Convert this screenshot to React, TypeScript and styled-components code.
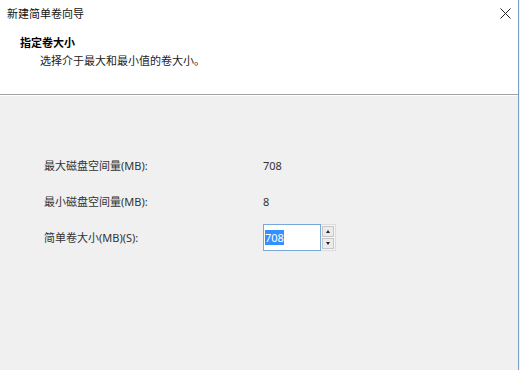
import React from 'react';
import styled, { createGlobalStyle } from 'styled-components';

const GlobalStyle = createGlobalStyle`
  html, body {
    margin: 0;
    padding: 0;
    background: #eef3f8;
  }
  body {
    font-family: 'Noto Sans', 'Noto Sans CJK SC', sans-serif;
    font-size: 11px;
    color: #1e1e1e;
  }
`;

const Window = styled.div`
  width: 519px;
  height: 370px;
  box-sizing: border-box;
  display: flex;
  flex-direction: column;
  border-right: 1px solid #7d9ec6;
  background: #f0f0f0;
  overflow: hidden;
`;

const Header = styled.div`
  height: 94px;
  background: #ffffff;
  border-bottom: 1px solid #a0a0a0;
  display: flex;
  flex-direction: column;
`;

const TitleBar = styled.div`
  height: 26px;
  display: flex;
  align-items: center;
  justify-content: space-between;
  padding: 0 7px 0 7px;
  color: #111;
`;

const CloseButton = styled.button`
  border: none;
  background: none;
  padding: 0;
  width: 12px;
  height: 12px;
  display: flex;
  align-items: center;
  justify-content: center;
  cursor: pointer;
`;

const Heading = styled.div`
  padding: 8px 0 0 20px;
  display: flex;
  flex-direction: column;
`;

const HeadingTitle = styled.div`
  font-weight: bold;
  line-height: 18px;
  color: #000;
`;

const HeadingSub = styled.div`
  padding-left: 20px;
  line-height: 17px;
  color: #222;
`;

const Body = styled.div`
  flex: 1;
  border-top: 1px solid #ffffff;
  padding: 55px 0 0 44px;
  display: flex;
  flex-direction: column;
  gap: 8px;
`;

const Row = styled.div`
  height: 28px;
  display: grid;
  grid-template-columns: 219px auto;
  align-items: center;
  color: #333;
`;

const Spin = styled.div`
  display: flex;
  height: 27px;
`;

const SpinInput = styled.input`
  width: 58px;
  height: 27px;
  box-sizing: border-box;
  border: 1px solid #7aa7d9;
  padding: 0 1px;
  font: inherit;
  color: #333;
  background: #fff;
  outline: none;

  &::selection {
    background: #3390ff;
    color: #fff;
  }
`;

const SpinButtons = styled.div`
  width: 15px;
  display: flex;
  flex-direction: column;
  gap: 1px;
  padding: 1px 0;
  box-sizing: border-box;
  background: #f6f6f6;
  border: 1px solid #dcdcdc;
  border-left: none;
`;

const SpinButton = styled.div`
  flex: 1;
  margin: 0 1px;
  background: #ebebeb;
  border: 1px solid #c6c6c6;
  display: flex;
  align-items: center;
  justify-content: center;
`;

const Arrow = styled.div<{ $up?: boolean }>`
  width: 0;
  height: 0;
  border-left: 2.5px solid transparent;
  border-right: 2.5px solid transparent;
  ${p => (p.$up ? 'border-bottom: 3px solid #222;' : 'border-top: 3px solid #222;')}
`;

export default function App() {
  const ref = React.useRef<HTMLInputElement>(null);
  React.useEffect(() => {
    ref.current?.focus();
    ref.current?.select();
  }, []);

  return (
    <>
      <GlobalStyle />
      <Window>
        <Header>
          <TitleBar>
            <span>新建简单卷向导</span>
            <CloseButton aria-label="关闭">
              <svg width="11" height="11" viewBox="0 0 11 11">
                <path d="M0.5 0.5 L10.5 10.5 M10.5 0.5 L0.5 10.5" stroke="#222" strokeWidth="1" />
              </svg>
            </CloseButton>
          </TitleBar>
          <Heading>
            <HeadingTitle>指定卷大小</HeadingTitle>
            <HeadingSub>选择介于最大和最小值的卷大小。</HeadingSub>
          </Heading>
        </Header>
        <Body>
          <Row>
            <span>最大磁盘空间量(MB):</span>
            <span>708</span>
          </Row>
          <Row>
            <span>最小磁盘空间量(MB):</span>
            <span>8</span>
          </Row>
          <Row>
            <span>简单卷大小(MB)(S):</span>
            <Spin>
              <SpinInput ref={ref} defaultValue="708" />
              <SpinButtons>
                <SpinButton><Arrow $up /></SpinButton>
                <SpinButton><Arrow /></SpinButton>
              </SpinButtons>
            </Spin>
          </Row>
        </Body>
      </Window>
    </>
  );
}
